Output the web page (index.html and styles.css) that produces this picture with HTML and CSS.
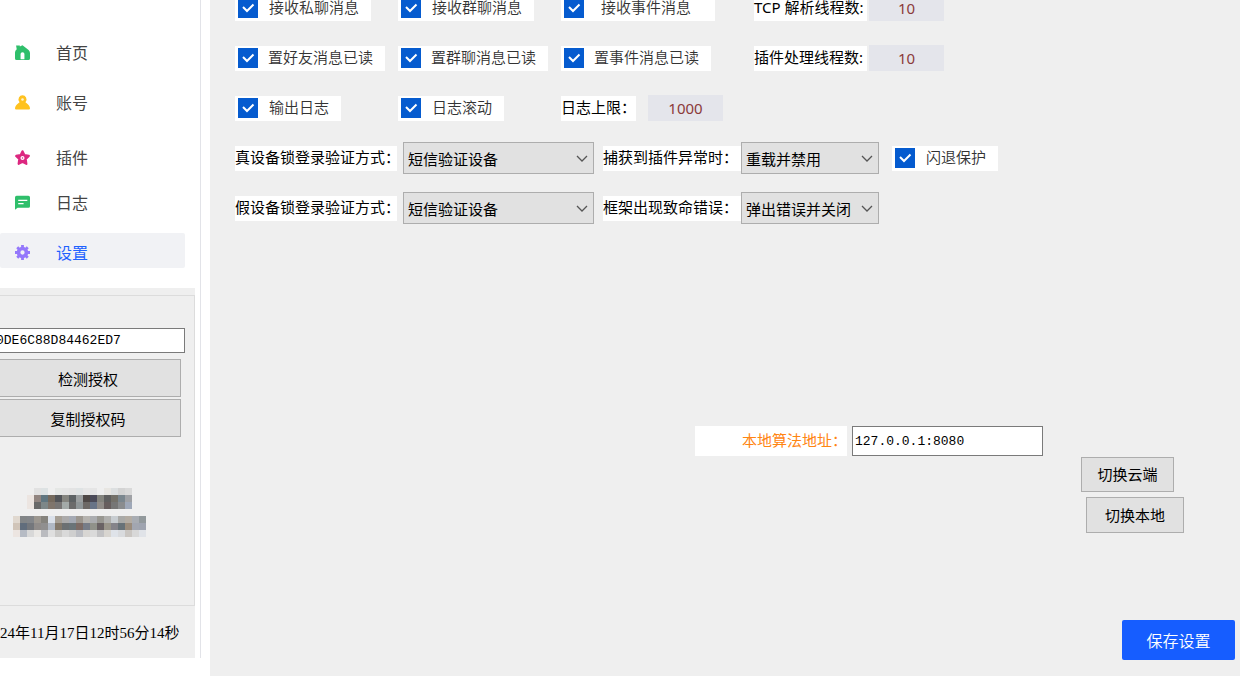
FILE: index.html
```html
<!DOCTYPE html>
<html lang="zh-CN">
<head>
<meta charset="utf-8">
<title>设置</title>
<link rel="stylesheet" href="styles.css">
</head>
<body>
<aside class="sidebar">
  <nav class="nav">
    <a class="nav-item" href="#home"><svg class="icon" viewBox="0 0 14 14"><path fill="#2fbf6b" d="M1 .5h3.500v.8L7 .2 12.700 4.700Q14 6 14 7.500V12.500q0 1.500-1.500 1.500h-11Q0 14 0 12.500V7q0-1.500 1.600-3z"/><path fill="#fff" d="M5.200 13.200V8.500a1.800 1.800 0 0 1 3.600 0v4.700z"/></svg>首页</a>
    <a class="nav-item" href="#account"><svg class="icon" viewBox="0 0 14 14"><path fill="#ffc21f" d="M7 .3a3.700 3.700 0 0 1 3 5.900c-.3.500 0 .9.600 1.200C12.600 8.600 14 11 14 12.500q0 1-1 1H1q-1 0-1-1C0 11 1.400 8.600 3.400 7.400c.6-.3.900-.7.600-1.200A3.700 3.700 0 0 1 7 .3z"/><circle cx="7" cy="4.200" r="1.200" fill="#fff3cf"/></svg>账号</a>
    <a class="nav-item nav-gap" href="#plugin"><svg class="icon" viewBox="0 0 14 14"><path fill="#dc2880" stroke="#dc2880" stroke-width="2" stroke-linejoin="round" d="M7 1.200l1.800 3.600 4.100.7-2.900 2.900.6 4.500L7 11l-3.600 1.900.6-4.500-2.900-2.900 4.100-.7z"/><circle cx="7" cy="7.500" r="1.900" fill="#fff"/><circle cx="7" cy="7.500" r=".7" fill="#dc2880"/></svg>插件</a>
    <a class="nav-item nav-tight" href="#log"><svg class="icon" viewBox="0 0 14 14"><path fill="#2fbf6b" d="M1.500.8h11Q14 .8 14 2.300v8.200q0 1.500-1.500 1.500H2.500L0 13.800V2.300Q0 .8 1.500.8z"/><path stroke="#fff" stroke-width="1.300" d="M3 5h8.500M3 8h5"/></svg>日志</a>
    <a class="nav-item active" href="#settings"><svg class="icon" viewBox="0 0 14 14"><circle cx="7" cy="7" r="3.700" fill="none" stroke="#9478fb" stroke-width="3.400"/><path stroke="#9478fb" stroke-width="2.600" d="M7 0v3M7 11v3M0 7h3M11 7h3M2.100 2.100l2 2M9.900 9.900l2 2M11.900 2.100l-2 2M4.100 9.900l-2 2"/></svg>设置</a>
  </nav>
  <section class="license">
    <div class="license-box">
      <input class="field code" type="text" aria-label="授权码" value="0DE6C88D84462ED7">
      <button class="btn wide" type="button">检测授权</button>
      <button class="btn wide" type="button">复制授权码</button>
      <svg class="mosaic" id="mosaic" viewBox="0 0 19 7" shape-rendering="crispEdges"></svg>
    </div>
    <p class="clock">24年11月17日12时56分14秒</p>
  </section>
</aside>
<main class="main">
  <form class="rows">
    <div class="row">
      <div class="cell"><label class="chip"><input type="checkbox" checked><span>接收私聊消息</span></label></div>
      <div class="cell"><label class="chip"><input type="checkbox" checked><span>接收群聊消息</span></label></div>
      <div class="cell third"><label class="chip spaced"><input type="checkbox" checked><span>接收事件消息</span></label></div>
      <label class="tag" for="tcp">TCP 解析线程数:</label><input class="num" id="tcp" type="text" value="10">
    </div>
    <div class="row">
      <div class="cell"><label class="chip long"><input type="checkbox" checked><span>置好友消息已读</span></label></div>
      <div class="cell"><label class="chip long"><input type="checkbox" checked><span>置群聊消息已读</span></label></div>
      <div class="cell third"><label class="chip long"><input type="checkbox" checked><span>置事件消息已读</span></label></div>
      <label class="tag" for="plug">插件处理线程数:</label><input class="num" id="plug" type="text" value="10">
    </div>
    <div class="row">
      <div class="cell"><label class="chip"><input type="checkbox" checked><span>输出日志</span></label></div>
      <div class="cell"><label class="chip"><input type="checkbox" checked><span>日志滚动</span></label></div>
      <label class="tag limit" for="limit">日志上限：</label><input class="num" id="limit" type="text" value="1000">
    </div>
    <div class="row">
      <label class="tag method" for="real">真设备锁登录验证方式：</label>
      <select class="select" id="real"><option>短信验证设备</option></select>
      <label class="tag event" for="catch">捕获到插件异常时：</label>
      <select class="select short" id="catch"><option>重载并禁用</option></select>
      <label class="chip guard"><input type="checkbox" checked><span>闪退保护</span></label>
    </div>
    <div class="row">
      <label class="tag method" for="fake">假设备锁登录验证方式：</label>
      <select class="select" id="fake"><option>短信验证设备</option></select>
      <label class="tag event" for="fatal">框架出现致命错误：</label>
      <select class="select short" id="fatal"><option>弹出错误并关闭</option></select>
    </div>
  </form>
  <div class="address">
    <label class="address-label" for="addr">本地算法地址：</label>
    <input class="field addr" id="addr" type="text" value="127.0.0.1:8080">
  </div>
  <div class="switches">
    <button class="btn cloud" type="button">切换云端</button>
    <button class="btn local" type="button">切换本地</button>
  </div>
  <button class="save" type="button">保存设置</button>
</main>
<script src="mosaic.js"></script>
</body>
</html>
```
FILE: styles.css
```css
* { box-sizing: border-box; }
body {
  margin: 0;
  min-height: 100vh;
  display: flex;
  background: #fff;
  color: #000;
  font-family: "Noto Sans CJK SC", sans-serif;
  font-size: 15px;
  overflow: hidden;
}
button, input, select { font: inherit; color: inherit; margin: 0; border-radius: 0; }

.sidebar {
  flex: none;
  width: 201px;
  margin: 0 9px 18px 0;
  padding-top: 33px;
  border-right: 1px solid #e2e3e8;
  display: flex;
  flex-direction: column;
}
.nav { display: flex; flex-direction: column; gap: 15px; width: 185px; }
.nav-item {
  display: flex;
  align-items: center;
  gap: 26px;
  height: 35px;
  padding: 3px 0 0 15px;
  color: #444;
  font-size: 16px;
  text-decoration: none;
}
.nav-gap { margin-top: 5px; }
.nav-tight { margin-top: -5px; }
.active { background: #f1f2f5; color: #1f62ff; border-radius: 2px; }
.icon { width: 15px; height: 15px; flex: none; }

.license {
  flex: 1;
  width: 195px;
  margin-top: 20px;
  padding-top: 7px;
  background: #efefef;
  display: flex;
  flex-direction: column;
}
.license-box {
  flex: 1;
  border: solid #dcdcdc;
  border-width: 1px 1px 1px 0;
  padding-top: 32px;
  display: flex;
  flex-direction: column;
  align-items: flex-start;
}
.field {
  border: 1px solid #7a7a7a;
  background: #fff;
  padding: 0 2px;
  font-family: "Liberation Mono", monospace;
  font-size: 13px;
}
.code { width: 185px; height: 25px; border-left: 0; padding-left: 0; text-indent: -4px; margin-bottom: 6px; }
.btn { background: #e1e1e1; border: 1px solid #adadad; padding: 0 0 2px; }
.wide { width: 181px; height: 38px; border-left: 0; padding: 0 4px 0 0; margin-bottom: 2px; }
.mosaic { width: 133px; height: 49px; margin: 49px 0 0 13px; }
.clock {
  margin: 0;
  padding-top: 2px;
  height: 52px;
  line-height: 50px;
  white-space: nowrap;
  font-family: "Liberation Serif", "Noto Sans CJK SC", serif;
}

.main {
  flex: 1;
  min-width: 0;
  background: #efefef;
  display: flex;
  flex-direction: column;
  padding: 0 5px 16px 25px;
}
.rows { margin-top: -17px; }
.row { display: flex; align-items: center; height: 50px; white-space: nowrap; }
.cell { width: 163px; flex: none; display: flex; }
.third { width: 193px; }
.chip {
  display: flex;
  align-items: center;
  gap: 11px;
  height: 25px;
  padding: 0 12px 0 3px;
  background: #fff;
  color: #333;
  font-weight: 350;
}
.chip span { line-height: 20px; padding-bottom: 2px; }
.long { gap: 10px; }
.spaced { gap: 17px; padding-right: 24px; }
.guard { margin-left: 13px; }
.chip input {
  appearance: none;
  width: 20px;
  height: 20px;
  flex: none;
  background: #055bcf url("data:image/svg+xml,%3Csvg xmlns='http://www.w3.org/2000/svg' viewBox='0 0 20 20'%3E%3Cpath d='M5 9l4 4 6.500-6.500' fill='none' stroke='white' stroke-width='2'/%3E%3C/svg%3E");
}
.tag {
  flex: none;
  width: 113px;
  height: 25px;
  line-height: 22px;
  background: #fff;
  font-family: "Noto Sans", "Noto Sans CJK SC", sans-serif;
}
.num {
  width: 75px;
  height: 26px;
  margin-left: 2px;
  padding: 0;
  border: 0;
  background: #e4e5eb;
  color: #8b3a3a;
  font-family: "Noto Sans", sans-serif;
  text-align: center;
}
.limit { width: 75px; margin-right: 10px; }
.method { width: 162px; margin-right: 6px; }
.event { width: 138px; margin-left: 9px; }
.select {
  appearance: none;
  width: 191px;
  height: 32px;
  padding: 0 4px;
  border: 1px solid #adadad;
  background: #e1e1e1 url("data:image/svg+xml,%3Csvg xmlns='http://www.w3.org/2000/svg' width='12' height='8'%3E%3Cpath d='M1 2l5 5 5-5' fill='none' stroke='%23555' stroke-width='1.300'/%3E%3C/svg%3E") no-repeat right 5px center;
}
.short { width: 138px; }

.address { display: flex; margin: 193px 0 0 460px; gap: 5px; }
.address-label {
  width: 152px;
  height: 30px;
  line-height: 28px;
  background: #fff;
  color: #ff8512;
  text-align: right;
}
.addr { width: 191px; height: 30px; }
.switches {
  display: flex;
  flex-direction: column;
  align-items: flex-end;
  gap: 5px;
  margin: 1px 51px 0 0;
}
.cloud { width: 93px; height: 35px; margin-right: 10px; }
.local { width: 98px; height: 36px; }
.save {
  width: 113px;
  height: 40px;
  margin-top: auto;
  align-self: flex-end;
  border: 0;
  border-radius: 2px;
  background: #165dff;
  color: #fff;
  font-size: 16px;
  font-weight: 350;
}
```
FILE: mosaic.js
```js
// Each row: y index, first column, then one colour per cell ("-" is empty).
const rows = [
  [0, 3, "e1e1e1 dde2e3 - e5e7e5 e5e5e5 e3e3e3 dfe3e4 e6e6e6 e5e5e5 - e8e6e2 dcdfe0 d3d3d3 d9d9d9"],
  [1, 2, "ece5e1 918580 607680 756a5e 525458 85857f 5d6264 9b9fa0 4e4846 4b4b59 84847e 5f5f5f 737069 7a868e 9fa1a5"],
  [2, 2, "ece5e1 696969 7d8788 7f756c 777574 a3aaa8 6b6b6b 8f9698 6c6865 687487 908c88 675e5e 767676 8a8c8e 9fa8b8"],
  [4, 0, "e0d8cf 828587 83868a 9c9790 85837d dbe1ea a69f95 abaaaa a5aab4 9c9790 b5b3af abadb0 989791 b0b0ae c8cdd1 aaaaa8 b3aca3 a8acb2 92999c"],
  [5, 0, "d0c4b8 616d7c 74777c 908c8a 908f8f b0b8c4 83786a 6c7072 6a7478 7c6b65 777d88 90928a 696264 99958a 85848a 687278 9a8c7c a2a6b0 9fa4b0"],
  [6, 0, "ece5e1 b6bbc4 d8d8d8 eae8e5 babbbf dfdfdf cac9c7 d9d9d9 cfcfcf bcbec4 d8d6d3 dadada c2c2c4 d8d5d0 dfe3e9 d9dbde cac6c2 d8d8d8 e0e3e8"]
];
const svg = document.getElementById("mosaic");
for (const [y, start, colours] of rows) {
  colours.split(" ").forEach((colour, i) => {
    if (colour === "-") return;
    const cell = document.createElementNS("http://www.w3.org/2000/svg", "rect");
    cell.setAttribute("x", start + i);
    cell.setAttribute("y", y);
    cell.setAttribute("width", 1);
    cell.setAttribute("height", 1);
    cell.setAttribute("fill", "#" + colour);
    svg.append(cell);
  });
}
```
